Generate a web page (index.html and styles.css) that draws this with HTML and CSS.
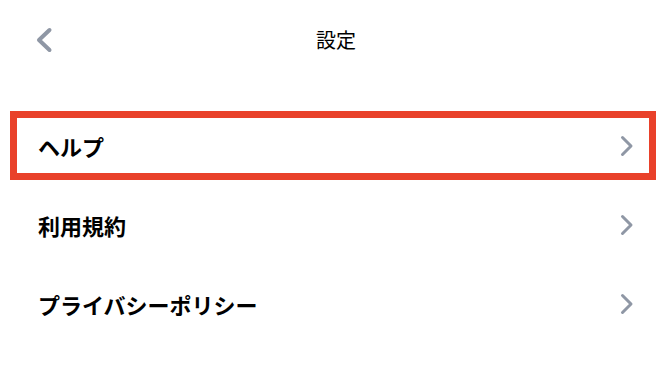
FILE: index.html
```html
<!DOCTYPE html>
<html lang="ja">
<head>
  <meta charset="UTF-8">
  <title>設定</title>
  <meta name="viewport" content="width=device-width, initial-scale=1.0">
  <link rel="stylesheet" href="styles.css">
</head>
<body>
  <div class="screen">
    <div class="header">
      <button class="back" aria-label="戻る">
        <svg width="18" height="26" viewBox="0 0 18 26">
          <path d="M14.5 3 L4 13 L14.5 23" fill="none" stroke="#8f97a5" stroke-width="4" stroke-linecap="round" stroke-linejoin="round"/>
        </svg>
      </button>
      <h1>設定</h1>
      <span></span>
    </div>

    <ul class="menu">
      <li class="item selected">
        <span>ヘルプ</span>
        <svg class="chev" width="14" height="22" viewBox="0 0 14 22">
          <path d="M2.5 2.5 L11 11 L2.5 19.5" fill="none" stroke="#8f97a5" stroke-width="3" stroke-linecap="round" stroke-linejoin="round"/>
        </svg>
      </li>
      <li class="item">
        <span>利用規約</span>
        <svg class="chev" width="14" height="22" viewBox="0 0 14 22">
          <path d="M2.5 2.5 L11 11 L2.5 19.5" fill="none" stroke="#8f97a5" stroke-width="3" stroke-linecap="round" stroke-linejoin="round"/>
        </svg>
      </li>
      <li class="item">
        <span>プライバシーポリシー</span>
        <svg class="chev" width="14" height="22" viewBox="0 0 14 22">
          <path d="M2.5 2.5 L11 11 L2.5 19.5" fill="none" stroke="#8f97a5" stroke-width="3" stroke-linecap="round" stroke-linejoin="round"/>
        </svg>
      </li>
    </ul>
  </div>
</body>
</html>
```

FILE: styles.css
```css
body {
  margin: 0;
  background: #ffffff;
  color: #000000;
  font-family: "Noto Sans CJK JP", "Noto Sans", sans-serif;
}

.screen {
  width: 672px;
  height: 382px;
  overflow: hidden;
}

.header {
  display: grid;
  grid-template-columns: 80px 1fr 80px;
  align-items: center;
  height: 80px;
}

.back {
  display: flex;
  align-items: center;
  justify-content: flex-start;
  padding: 0 0 0 35px;
  margin: 0;
  background: none;
  border: none;
  cursor: pointer;
}

.header h1 {
  margin: 0;
  text-align: center;
  font-size: 20px;
  font-weight: 400;
  line-height: 1;
}

.menu {
  list-style: none;
  margin: 31px 16px 0 10px;
  padding: 0;
  display: flex;
  flex-direction: column;
  gap: 10px;
}

.item {
  display: flex;
  align-items: center;
  justify-content: space-between;
  height: 69px;
  box-sizing: border-box;
  padding: 0 15px 0 21px;
  border: 7px solid transparent;
  font-size: 22px;
  font-weight: 700;
}

.item.selected {
  border-color: #e9412a;
}

.chev {
  display: block;
}
```
